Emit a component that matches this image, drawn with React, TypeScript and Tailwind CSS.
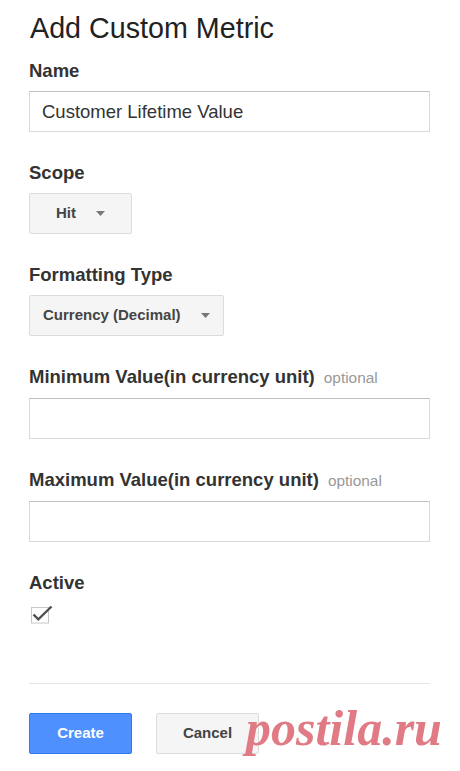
import type { ReactNode } from 'react';

function Caret() {
	return (
		<svg width="9" height="5" viewBox="0 0 9 5" className="shrink-0">
			<polygon points="0,0 9,0 4.5,5" fill="#777777" />
		</svg>
	);
}

function Field(props: { label: string; optional?: boolean; children: ReactNode }) {
	const { label, optional, children } = props;
	return (
		<div className="mt-[30px] first:mt-[16px]">
			<div className="mb-[9px] flex items-baseline text-[18.5px] leading-[22px] font-bold text-[#333]">
				{label}
				{optional && (
					<span className="ml-[9px] text-[15.4px] font-normal text-[#999]">optional</span>
				)}
			</div>
			{children}
		</div>
	);
}

function TextBox(props: { value?: string }) {
	return (
		<div className="flex h-[41px] w-full items-center border border-[#d9d9d9] border-t-[#c0c0c0] bg-white px-[12px] text-[18.5px] text-[#333]">
			{props.value}
		</div>
	);
}

function Dropdown(props: { value: string }) {
	return (
		<div className="inline-flex h-[41px] min-w-[103px] items-center justify-center gap-[20px] rounded-[2px] border border-[#dcdcdc] bg-[#f5f5f5] px-[13px] text-[15px] font-bold text-[#444]">
			<span>{props.value}</span>
			<Caret />
		</div>
	);
}

export default function App() {
	return (
		<div className="relative min-h-[771px] bg-white pl-[29px] pr-[30px] pt-[12px] font-['Liberation_Sans',Arial,sans-serif]">
			<h1 className="pl-[1px] text-[28.7px] leading-[32px] font-normal text-[#222]">Add Custom Metric</h1>

			<div>
				<Field label="Name">
					<TextBox value="Customer Lifetime Value" />
				</Field>

				<Field label="Scope">
					<Dropdown value="Hit" />
				</Field>

				<Field label="Formatting Type">
					<Dropdown value="Currency (Decimal)" />
				</Field>

				<Field label="Minimum Value(in currency unit)" optional>
					<TextBox />
				</Field>

				<Field label="Maximum Value(in currency unit)" optional>
					<TextBox />
				</Field>

				<div className="mt-[30px]">
					<div className="text-[18.5px] leading-[22px] font-bold text-[#333]">Active</div>
					{/* checked box, tick runs over the top right corner */}
					<svg width="24" height="22" viewBox="0 0 24 22" className="mt-[9px] ml-[1px]">
						<rect x="1.5" y="4.5" width="17" height="15.5" fill="#ffffff" stroke="#c6c6c6" />
						<polyline
							points="3.5,11.5 8.3,16.3 21.5,3.5"
							fill="none"
							stroke="#4f4f4f"
							strokeWidth="2.4"
						/>
					</svg>
				</div>
			</div>

			<div className="mt-[58px] border-t border-[#e5e5e5]" />

			<div className="relative mt-[29px] flex gap-[24px]">
				<button className="h-[41px] w-[103px] rounded-[2px] border border-[#3079ed] bg-[#4d90fe] text-[15px] font-bold text-white">
					Create
				</button>
				<button className="h-[41px] w-[103px] rounded-[2px] border border-[#dcdcdc] bg-[#f5f5f5] text-[15px] font-bold text-[#444]">
					Cancel
				</button>

				<span className="pointer-events-none absolute left-[217px] top-[-10px] font-['Liberation_Serif',serif] text-[50px] leading-[50px] font-bold italic text-[#e07a84]">
					postila.ru
				</span>
			</div>
		</div>
	);
}
